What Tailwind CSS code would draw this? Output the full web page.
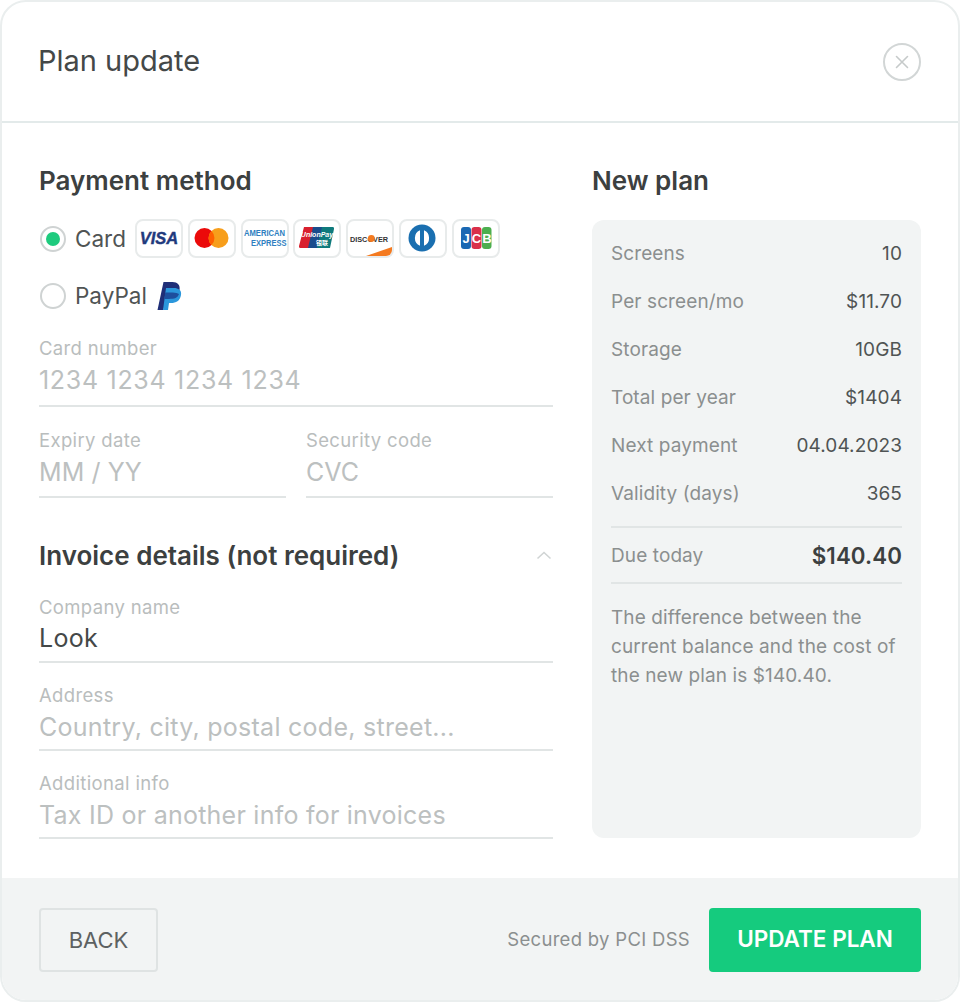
<!DOCTYPE html>
<html lang="en">
<head>
<meta charset="UTF-8">
<title>Plan update</title>
<script src="https://cdn.jsdelivr.net/npm/@tailwindcss/browser@4"></script>
</head>
<body class="bg-white font-['Inter',sans-serif] text-[#3c4040]">
<div class="w-[960px] h-[1002px] flex flex-col border-2 border-[#eaeeee] rounded-[26px] overflow-hidden bg-white">

  <!-- header -->
  <div class="h-[121px] shrink-0 flex items-center justify-between pl-[37px] pr-[37px] border-b-2 border-[#e3eaea]">
    <h1 class="text-[29px] leading-none -ml-px mb-[2px] text-[#444848]">Plan update</h1>
    <button class="w-[38px] h-[38px] rounded-full border-2 border-[#d2d6d6] flex items-center justify-center">
      <svg width="14" height="14" viewBox="0 0 14 14" fill="none" stroke="#c6caca" stroke-width="1.6" stroke-linecap="round"><path d="M1.500 1.500l11 11M12.500 1.500l-11 11"/></svg>
    </button>
  </div>

  <!-- body -->
  <div class="flex-1 flex pl-[37px] pr-[37px] pt-[42px]">
    <div class="w-[514px] shrink-0">
      <h2 class="text-[26px] leading-[32px] font-semibold text-[#3c4040]">Payment method</h2>

      <div class="flex items-center mt-[22px] h-[39px]">
        <span class="w-[26px] h-[26px] rounded-full border-2 border-[#cfd3d3] flex items-center justify-center ml-px">
          <span class="w-[14px] h-[14px] rounded-full bg-[#1ecb7e]"></span>
        </span>
        <span class="ml-[9px] w-[60px] text-[22.5px] text-[#505454]">Card</span>
        <div class="flex gap-[4.8px]">
          <span class="w-[48px] h-[39px] rounded-lg border-2 border-[#e8ebeb] flex items-center justify-center">
            <svg width="44" height="35" viewBox="0 0 44 35"><text x="22" y="23" text-anchor="middle" font-family="Liberation Sans" font-weight="700" font-style="italic" font-size="16.5" fill="#1f3a7d" stroke="#1f3a7d" stroke-width="0.4">VISA</text></svg>
          </span>
          <span class="w-[48px] h-[39px] rounded-lg border-2 border-[#e8ebeb] flex items-center justify-center">
            <svg width="44" height="35" viewBox="0 0 44 35"><circle cx="14.500" cy="17" r="10" fill="#eb0a0a"/><circle cx="28.500" cy="17" r="10" fill="#f79e1b"/><path d="M21.500 9.900a10 10 0 0 1 0 14.200a10 10 0 0 1 0-14.200z" fill="#ff5f00"/></svg>
          </span>
          <span class="w-[48px] h-[39px] rounded-lg border-2 border-[#e8ebeb] flex items-center justify-center">
            <svg width="44" height="35" viewBox="0 0 44 35" font-family="Liberation Sans" font-weight="700" fill="#2f7fc1"><g transform="scale(1 1.25)"><text x="1" y="12.200" font-size="7.5" textLength="41" lengthAdjust="spacingAndGlyphs">AMERICAN</text><text x="8" y="20.200" font-size="7.5" textLength="35.500" lengthAdjust="spacingAndGlyphs">EXPRESS</text></g></svg>
          </span>
          <span class="w-[48px] h-[39px] rounded-lg border-2 border-[#e8ebeb] flex items-center justify-center">
            <svg width="44" height="35" viewBox="0 0 44 35"><path d="M9 6h11l-5 21H5a1.500 1.500 0 0 1-1-2z" fill="#d8202e"/><path d="M18 6h11l-5 21H13z" fill="#1a4c8c"/><path d="M27 6h11a1.500 1.500 0 0 1 1 2l-4 19H22z" fill="#0f7a7c"/><text x="22" y="16" text-anchor="middle" font-family="Liberation Sans" font-weight="700" font-style="italic" font-size="7" fill="#fff">UnionPay</text><text x="27" y="24" text-anchor="middle" font-family="Noto Sans CJK SC" font-weight="700" font-size="6" fill="#fff">银联</text></svg>
          </span>
          <span class="w-[48px] h-[39px] rounded-lg border-2 border-[#e8ebeb] flex items-center justify-center overflow-hidden">
            <svg width="44" height="35" viewBox="0 0 44 35"><path d="M18 35L44 26v9z" fill="#f47a20"/><text x="2" y="20.500" font-family="Liberation Sans" font-weight="700" font-size="8" textLength="38" lengthAdjust="spacingAndGlyphs" fill="#333">DISCOVER</text><circle cx="23.300" cy="17.500" r="3.400" fill="#f47a20"/></svg>
          </span>
          <span class="w-[48px] h-[39px] rounded-lg border-2 border-[#e8ebeb] flex items-center justify-center">
            <svg width="44" height="35" viewBox="0 0 44 35"><circle cx="21" cy="17" r="13.500" fill="#1a6fb0"/><path d="M19 9.200a8.500 8.500 0 0 0 0 15.600zM23 9.200a8.500 8.500 0 0 1 0 15.600z" fill="#fff"/></svg>
          </span>
          <span class="w-[48px] h-[39px] rounded-lg border-2 border-[#e8ebeb] flex items-center justify-center">
            <svg width="44" height="35" viewBox="0 0 44 35" font-family="Liberation Sans" font-weight="700" font-size="13" fill="#fff" text-anchor="middle"><rect x="7" y="6" width="10" height="22" rx="3" fill="#1a68b3"/><rect x="17.500" y="6" width="10" height="22" rx="3" fill="#d9304a"/><rect x="28" y="6" width="9.500" height="22" rx="3" fill="#4cae4f"/><text x="12" y="22">J</text><text x="22.500" y="22">C</text><text x="33" y="22">B</text></svg>
          </span>
        </div>
      </div>

      <div class="flex items-center mt-[18px] h-[39px]">
        <span class="w-[26px] h-[26px] rounded-full border-2 border-[#cfd3d3] ml-px"></span>
        <span class="ml-[9px] text-[22.5px] text-[#505454]">PayPal</span>
        <svg class="ml-[10px]" width="26" height="30" viewBox="0 0 26 30"><path d="M6.500 1h9c5 0 8 3 7 8-1 6-5 9-11 9H8.500l-2 11H.5z" fill="#1f2f78"/><path d="M9 7h8c4 0 8 2 7 7-1 6-5 8-10 8h-2l-1 7H6z" fill="#2b97dc"/><path d="M8.200 11.500h7.500c3 0 5 1 6.300 1.600C20.700 17 17.600 18 12 18H7.300z" fill="#1d4f9e"/></svg>
      </div>

      <div class="mt-[21px] h-[71px] border-b-2 border-[#e1e5e5]">
        <label class="block text-[18.5px] leading-[24px] tracking-[0.35px] text-[#b9bdbd]">Card number</label>
        <div class="text-[25px] leading-[40px] tracking-[0.7px] text-[#bcc0c0]">1234 1234 1234 1234</div>
      </div>

      <div class="flex gap-[20px] mt-[21px]">
        <div class="w-[247px] h-[70px] border-b-2 border-[#e1e5e5]">
          <label class="block text-[18.5px] leading-[24px] tracking-[0.35px] text-[#b9bdbd]">Expiry date</label>
          <div class="text-[25px] leading-[40px] tracking-[0.1px] text-[#bcc0c0]">MM / YY</div>
        </div>
        <div class="w-[247px] h-[70px] border-b-2 border-[#e1e5e5]">
          <label class="block text-[18.5px] leading-[24px] tracking-[0.35px] text-[#b9bdbd]">Security code</label>
          <div class="text-[25px] leading-[40px] text-[#bcc0c0]">CVC</div>
        </div>
      </div>

      <div class="flex items-center justify-between mt-[41px] h-[32px]">
        <h2 class="text-[26px] font-semibold text-[#3c4040]">Invoice details (not required)</h2>
        <svg class="mr-px" width="16" height="9" viewBox="0 0 16 9" fill="none" stroke="#d0d4d4" stroke-width="1.6"><path d="M1.500 7.500L8 1.500l6.500 6"/></svg>
      </div>

      <div class="mt-[24px] h-[68px] border-b-2 border-[#e1e5e5]">
        <label class="block text-[18.5px] leading-[24px] tracking-[0.35px] text-[#b9bdbd]">Company name</label>
        <div class="text-[25px] leading-[38px] tracking-[0.3px] text-[#444848]">Look</div>
      </div>
      <div class="mt-[20px] h-[68px] border-b-2 border-[#e1e5e5]">
        <label class="block text-[18.5px] leading-[24px] tracking-[0.35px] text-[#b9bdbd]">Address</label>
        <div class="text-[25px] leading-[40px] tracking-[0.27px] text-[#bcc0c0]">Country, city, postal code, street...</div>
      </div>
      <div class="mt-[20px] h-[68px] border-b-2 border-[#e1e5e5]">
        <label class="block text-[18.5px] leading-[24px] tracking-[0.35px] text-[#b9bdbd]">Additional info</label>
        <div class="text-[25px] leading-[40px] tracking-[0.24px] text-[#bcc0c0]">Tax ID or another info for invoices</div>
      </div>
    </div>

    <!-- summary -->
    <div class="w-[329px] ml-[39px] shrink-0">
      <h2 class="text-[26px] leading-[32px] font-semibold text-[#3c4040]">New plan</h2>
      <div class="mt-[23px] h-[618px] rounded-xl bg-[#f2f4f4] px-[19px] pt-[10px] text-[19px] tracking-[0.1px]">
        <div class="flex justify-between items-center h-[48px]"><span class="text-[#8b8f8f]">Screens</span><span class="text-[#505454]">10</span></div>
        <div class="flex justify-between items-center h-[48px]"><span class="text-[#8b8f8f]">Per screen/mo</span><span class="text-[#505454]">$11.70</span></div>
        <div class="flex justify-between items-center h-[48px]"><span class="text-[#8b8f8f]">Storage</span><span class="text-[#505454]">10GB</span></div>
        <div class="flex justify-between items-center h-[48px]"><span class="text-[#8b8f8f]">Total per year</span><span class="text-[#505454]">$1404</span></div>
        <div class="flex justify-between items-center h-[48px]"><span class="text-[#8b8f8f]">Next payment</span><span class="text-[#505454]">04.04.2023</span></div>
        <div class="flex justify-between items-center h-[48px]"><span class="text-[#8b8f8f]">Validity (days)</span><span class="text-[#505454]">365</span></div>
        <div class="flex justify-between items-center h-[58px] mt-[8px] pt-[2px] border-y-2 border-[#e1e5e5]"><span class="text-[#8b8f8f]">Due today</span><span class="text-[22.3px] font-semibold text-[#3c4040]">$140.40</span></div>
        <p class="mt-[19px] leading-[29px] text-[#8b8f8f]">The difference between the current balance and the cost of the new plan is $140.40.</p>
      </div>
    </div>
  </div>

  <!-- footer -->
  <div class="h-[122px] shrink-0 bg-[#f2f4f4] flex items-center justify-between pl-[37px] pr-[37px] pt-[2px]">
    <button class="w-[119px] h-[64px] rounded border-2 border-[#dfe3e3] text-[22px] text-[#5d6161]">BACK</button>
    <div class="flex items-center">
      <span class="text-[18.5px] tracking-[0.3px] text-[#8b8f8f] mr-[19px]">Secured by PCI DSS</span>
      <button class="w-[212px] h-[64px] pb-[2px] rounded bg-[#15cb7e] text-[22.5px] font-semibold text-white">UPDATE PLAN</button>
    </div>
  </div>
</div>
</body>
</html>
